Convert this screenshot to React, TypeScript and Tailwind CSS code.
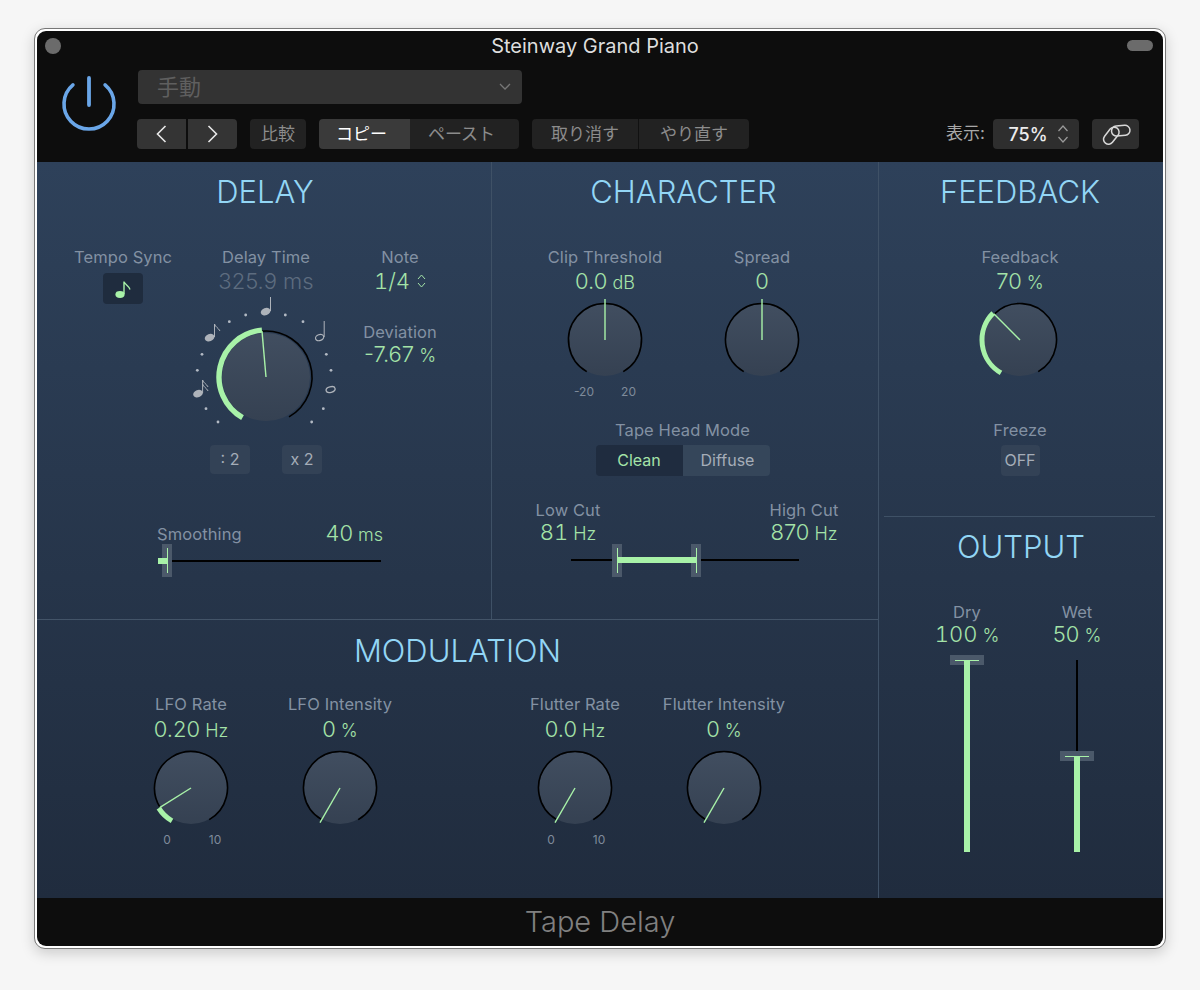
import React from "react";

const pt = (cx: number, cy: number, r: number, deg: number): [number, number] => {
  const a = (deg * Math.PI) / 180;
  return [cx + r * Math.sin(a), cy - r * Math.cos(a)];
};
const arc = (cx: number, cy: number, r: number, from: number, to: number) => {
  const [x1, y1] = pt(cx, cy, r, from);
  const [x2, y2] = pt(cx, cy, r, to);
  return `M${x1} ${y1}A${r} ${r} 0 ${to - from > 180 ? 1 : 0} 1 ${x2} ${y2}`;
};

const GREEN = "#a8f2a8";

function KnobGfx({ cx = 0, cy = 0, disc = 36, blackR = 36.5, greenR = 38, greenW = 5, value, len = 41, filled = false }: { cx?: number; cy?: number; disc?: number; blackR?: number; greenR?: number; greenW?: number; value: number; len?: number; filled?: boolean }) {
  const [px, py] = pt(cx, cy, len, value);
  return (
    <g>
      <defs>
        <linearGradient id="knobfill" x1="0" y1="0" x2="0" y2="1">
          <stop offset="0" stopColor="#414e60" />
          <stop offset="1" stopColor="#354152" />
        </linearGradient>
      </defs>
      <circle cx={cx} cy={cy} r={disc} fill="url(#knobfill)" />
      <path d={arc(cx, cy, blackR, filled ? value : -150, 150)} fill="none" stroke="#000" strokeWidth="1.6" />
      {filled && <path d={arc(cx, cy, greenR, -150, value)} fill="none" stroke={GREEN} strokeWidth={greenW} />}
      <line x1={cx} y1={cy} x2={px} y2={py} stroke={GREEN} strokeWidth="1.4" />
    </g>
  );
}

function Knob({ value, filled, len }: { value: number; filled?: boolean; len?: number }) {
  return (
    <svg width="88" height="88" viewBox="-44 -44 88 88" className="block">
      <KnobGfx value={value} filled={filled} len={len} />
    </svg>
  );
}

function Label({ children }: { children: React.ReactNode }) {
  return <div className="h-6 text-[16.5px] leading-[22px] text-[#8391a3] whitespace-nowrap text-center tracking-[0.1px]">{children}</div>;
}

function Value({ v, unit, tight, tab }: { v: string; unit?: string; tight?: boolean; tab?: boolean }) {
  return (
    <div className={`${tight ? "-mt-[2px]" : ""} ${tab ? "tabular-nums" : ""} h-[26px] leading-[22px] text-[22px] font-light text-[#a4e3a8] whitespace-nowrap text-center`}>
      {v}
      {unit && <span className="text-[18px] ml-[5px]">{unit}</span>}
    </div>
  );
}

function Title({ children }: { children: React.ReactNode }) {
  return <div className="h-[62px] leading-[60px] text-[31px] font-light text-[#93d6f5] text-center">{children}</div>;
}

function Handle({ className }: { className: string }) {
  return (
    <div className={`absolute top-0 h-[33px] w-[10px] bg-[#4b596a] flex justify-center ${className}`}>
      <div className="mt-1 h-[25px] w-px bg-[#a8f2a8]" />
    </div>
  );
}

function SmallBtn({ children, className = "" }: { children: React.ReactNode; className?: string }) {
  return <div className={`flex items-center justify-center rounded-[4px] bg-[#334256] pb-[2px] text-[#a5adb8] ${className}`}>{children}</div>;
}

function Fader({ top }: { top: number }) {
  return (
    <div className="relative mx-auto mt-[6px] h-[197px] w-[34px]">
      <div className="absolute left-[16px] top-[5px] h-[192px] w-[2px] bg-black" />
      <div className="absolute left-0 h-[10px] w-[34px] bg-[#4b596a] flex items-center justify-center" style={{ top }}>
        <div className="h-px w-[24px] bg-[#a8f2a8]" />
      </div>
      <div className="absolute left-[14px] bottom-0 w-[6px] bg-[#a8f2a8]" style={{ top: top + 5 }} />
    </div>
  );
}

function HeadBtn({ children, className = "" }: { children: React.ReactNode; className?: string }) {
  return <div className={`h-[30px] flex items-center justify-center text-[17px] ${className}`}>{children}</div>;
}

function Mod({ label, v, unit, value, filled, min, max, className = "" }: { label: string; v: string; unit: string; value: number; filled?: boolean; min?: string; max?: string; className?: string }) {
  return (
    <div className={`w-[120px] flex flex-col items-center ${className}`}>
      <Label>{label}</Label>
      <div className="mt-[1px]"><Value v={v} unit={unit} /></div>
      <Knob value={value} filled={filled} len={filled ? 37 : 40} />
      {min && (
        <div className="flex w-[72px] justify-between text-[12px] leading-[14px] text-[#7f8b9b] mt-[1px]">
          <span className="w-6 text-center">{min}</span>
          <span className="w-6 text-center">{max}</span>
        </div>
      )}
    </div>
  );
}

export default function App() {
  const dots: [number, number][] = [[557,252],[508,272],[426,370],[412,418],[438,533],[474,573],[676,252],[729,272],[799,370],[813,418],[790,533],[755,573]];
  return (
    <div className="w-[1200px] h-[990px] bg-[#f6f6f6] pt-[28px] pl-[34px] font-['Inter','Noto_Sans_CJK_JP',sans-serif]">
      <div className="w-[1132px] h-[921px] rounded-[11px] bg-white border border-[#777] p-[2px] shadow-[0_4px_14px_rgba(0,0,0,0.18)]">
        <div className="h-full w-full rounded-[9px] overflow-hidden bg-[#0d0d0d] flex flex-col">
          {/* Header */}
          <div className="h-[131px] shrink-0 relative flex">
            <div className="absolute left-[8px] top-[7px] h-4 w-4 rounded-full bg-[#6b6b6b]" />
            <div className="absolute right-[10px] top-[9px] h-[11px] w-[26px] rounded-full bg-[#6b6b6b]" />
            <div className="absolute left-[408px] top-[3px] w-[300px] text-center text-[20px] leading-[24px] text-[#dedede] font-normal">Steinway Grand Piano</div>
            <div className="w-[101px] shrink-0 pl-[24px] pt-[43px]">
              <svg width="56" height="58" viewBox="0 0 56 58" className="block">
                <path d={arc(28, 30, 25, 40, 320)} fill="none" stroke="#6aa6e8" strokeWidth="3.6" strokeLinecap="round" />
                <line x1="28" y1="4" x2="28" y2="31" stroke="#6aa6e8" strokeWidth="3.8" strokeLinecap="round" />
              </svg>
            </div>
            <div className="flex-1 pt-[39px] min-w-0">
              <div className="h-[34px] w-[384px] rounded-[4px] bg-[#333333] flex items-center justify-between pl-[19px] pr-[11px] text-[22px] text-[#5f5f5f]">
                <span>手動</span>
                <svg width="12" height="8" viewBox="0 0 12 8"><path d="M1 1l5 5 5-5" fill="none" stroke="#777" strokeWidth="1.3" /></svg>
              </div>
              <div className="mt-[15px] flex items-center -ml-px">
                <div className="flex w-[100px] h-[30px] rounded-[4px] overflow-hidden gap-[2px]">
                  <div className="flex-1 bg-[#343434] flex items-center justify-center"><svg width="11" height="18" viewBox="0 0 11 18"><path d="M9.5 1L1.5 9l8 8" fill="none" stroke="#e8e8e8" strokeWidth="1.6" /></svg></div>
                  <div className="flex-1 bg-[#343434] flex items-center justify-center"><svg width="11" height="18" viewBox="0 0 11 18"><path d="M1.5 1l8 8-8 8" fill="none" stroke="#e8e8e8" strokeWidth="1.6" /></svg></div>
                </div>
                <HeadBtn className="w-[56px] ml-[13px] rounded-[4px] bg-[#222] pt-[2px] text-[#8c8c8c]">比較</HeadBtn>
                <div className="ml-[13px] flex rounded-[4px] overflow-hidden">
                  <HeadBtn className="w-[91px] bg-[#3a3a3a] text-white pr-[6px] pt-[1px]">コピー</HeadBtn>
                  <HeadBtn className="w-[109px] bg-[#222] text-[#8c8c8c] pr-[6px] pt-[1px]">ペースト</HeadBtn>
                </div>
                <div className="ml-[13px] flex rounded-[4px] overflow-hidden">
                  <HeadBtn className="w-[107px] bg-[#222] text-[#8c8c8c] border-r border-[#111] pt-[2px]">取り消す</HeadBtn>
                  <HeadBtn className="w-[110px] bg-[#222] text-[#8c8c8c] pt-[2px]">やり直す</HeadBtn>
                </div>
                <div className="w-[244px] text-right text-[17px] text-[#a8a8a8] pr-[8px]">表示:</div>
                <HeadBtn className="w-[86px] rounded-[4px] bg-[#2e2e2e] text-[#ececec] font-medium text-[18px] gap-[9px] pl-[5px]">
                  <span>75%</span>
                  <svg width="12" height="20" viewBox="0 0 12 20"><path d="M1.5 7L6 2l4.5 5M1.5 13L6 18l4.5-5" fill="none" stroke="#999" strokeWidth="1.2" /></svg>
                </HeadBtn>
                <HeadBtn className="w-[47px] ml-[13px] rounded-[4px] bg-[#2e2e2e]">
                  <svg width="30" height="24" viewBox="0 0 30 24">
                    <rect x="10.5" y="3.7" width="18.5" height="10" rx="5" fill="none" stroke="#d8d8d8" strokeWidth="1.5" transform="rotate(-5 19.7 8.7)" />
                    <rect x="0.8" y="8.7" width="19" height="10" rx="5" fill="none" stroke="#d8d8d8" strokeWidth="1.5" transform="rotate(-52 10.3 13.7)" />
                  </svg>
                </HeadBtn>
              </div>
            </div>
          </div>

          {/* Panel */}
          <div className="h-[736px] shrink-0 flex bg-linear-to-b from-[#2e415a] to-[#202c3e]">
            <div className="w-[841px] shrink-0 flex flex-col">
              <div className="h-[458px] shrink-0 flex border-b border-[#435468]">
                {/* DELAY */}
                <div className="w-[455px] shrink-0 border-r border-[#3f5166]">
                  <div className="pl-[2px]"><Title>DELAY</Title></div>
                  <div className="flex pt-[22px] pl-[38px]">
                    <div className="w-[96px] flex flex-col items-center">
                      <Label>Tempo Sync</Label>
                      <div className="mt-[3px] h-[31px] w-[40px] rounded-[4px] bg-[#1f2c3e] flex items-center justify-center">
                        <svg width="18" height="20" viewBox="0 0 18 20"><ellipse cx="6" cy="15.5" rx="4.6" ry="3.4" fill="#a8f2a8" /><path d="M10 15V2.5c.5 3 5 4 6 8" fill="none" stroke="#a8f2a8" strokeWidth="1.4" /></svg>
                      </div>
                    </div>
                    <div className="w-[190px] flex flex-col items-center">
                      <Label>Delay Time</Label>
                      <div className="h-[26px] leading-[22px] text-[22px] font-light text-[#5d6c7f] whitespace-nowrap">325.9 ms</div>
                      <svg width="190" height="141" viewBox="171 295 190 141" className="block">
                        {dots.map(([x, y]) => <circle key={x + "," + y} cx={60 + x / 3} cy={230 + y / 3} r="1.4" fill="#b3bac4" />)}
                        <KnobGfx cx={266} cy={376} disc={44} blackR={46} greenR={47} greenW={5.4} value={-5} len={46} filled />
                        <g fill="#aeb3ba" stroke="#aeb3ba">
                          <ellipse cx="265.6" cy="310.6" rx="5" ry="3.6" stroke="none" transform="rotate(-20 265.6 310.6)" />
                          <line x1="270.5" y1="296" x2="270.5" y2="310" strokeWidth="1" />
                          <ellipse cx="209.6" cy="336.6" rx="5" ry="3.6" stroke="none" transform="rotate(-20 209.6 336.6)" />
                          <path d="M214.5 323v13M214.5 323c.8 3 4 4 5.5 7" fill="none" strokeWidth="1" />
                          <ellipse cx="319.6" cy="336.6" rx="4.2" ry="3" fill="none" strokeWidth="1.2" transform="rotate(-20 319.6 336.6)" />
                          <line x1="324.2" y1="320" x2="324.2" y2="336" strokeWidth="1" />
                          <ellipse cx="330.6" cy="388.6" rx="4.6" ry="2.8" fill="none" strokeWidth="1.3" transform="rotate(-15 330.6 388.6)" />
                          <ellipse cx="198" cy="392.6" rx="5" ry="3.6" stroke="none" transform="rotate(-20 198 392.6)" />
                          <path d="M202.6 379v13M202.6 379c.8 3 4 4 5.5 7M202.6 383c.8 3 4 4 5.5 7" fill="none" strokeWidth="1" />
                        </g>
                      </svg>
                      <div className="mt-[8px] flex gap-[32px]">
                        <SmallBtn className="h-[29px] w-[40px] text-[16px]">: 2</SmallBtn>
                        <SmallBtn className="h-[29px] w-[40px] text-[16px]">x 2</SmallBtn>
                      </div>
                    </div>
                    <div className="w-[78px] flex flex-col items-center">
                      <Label>Note</Label>
                      <div className="flex items-start gap-[7px] h-[26px]">
                        <span className="text-[22px] font-light tabular-nums text-[#a4e3a8] leading-[22px]">1/4</span>
                        <svg width="9" height="14" viewBox="0 0 9 14" className="mt-[4px]"><path d="M1 5l3.5-4L8 5M1 9l3.5 4L8 9" fill="none" stroke="#a4e3a8" strokeWidth="1" /></svg>
                      </div>
                      <div className="mt-[25px]"><Label>Deviation</Label></div>
                      <Value v="-7.67" unit="%" tight />
                    </div>
                  </div>
                  <div className="ml-[120px] mt-[49px] w-[226px]">
                    <div className="flex justify-between items-center h-6">
                      <Label>Smoothing</Label>
                      <Value v="40" unit="ms" />
                    </div>
                    <div className="relative -mt-[3px] h-[33px] w-[226px]">
                      <div className="absolute left-[1px] right-[2px] top-[16px] h-[2px] bg-black" />
                      <Handle className="left-[5px]" />
                      <div className="absolute left-[1px] top-[14px] h-[6px] w-[9px] bg-[#a8f2a8]" />
                    </div>
                  </div>
                </div>
                {/* CHARACTER */}
                <div className="flex-1 min-w-0">
                  <div className="pr-[3px]"><Title>CHARACTER</Title></div>
                  <div className="flex pt-[22px] pl-[53px]">
                    <div className="w-[120px] flex flex-col items-center">
                      <Label>Clip Threshold</Label>
                      <Value v="0.0" unit="dB" />
                      <Knob value={0} />
                      <div className="flex w-[62px] justify-between text-[12px] leading-[14px] text-[#7f8b9b] mt-[1px]">
                        <span>-20</span><span>20</span>
                      </div>
                    </div>
                    <div className="w-[120px] ml-[37px] flex flex-col items-center">
                      <Label>Spread</Label>
                      <Value v="0" />
                      <Knob value={0} />
                    </div>
                  </div>
                  <div className="mt-[20px] flex flex-col items-center -ml-[5px]">
                    <Label>Tape Head Mode</Label>
                    <div className="mt-[2px] flex h-[31px] w-[174px] rounded-[4px] overflow-hidden text-[16px]">
                      <div className="w-[87px] bg-[#1f2c3f] text-[#a4e3a8] flex items-center justify-center pb-[1px]">Clean</div>
                      <div className="w-[87px] bg-[#35465a] text-[#a5adb8] flex items-center justify-center pb-[1px] pl-[3px]">Diffuse</div>
                    </div>
                  </div>
                  <div className="mt-[23px] pl-[26px] pr-[24px] flex justify-between">
                    <div className="w-[100px]"><Label>Low Cut</Label><Value v="81" unit="Hz" tight tab /></div>
                    <div className="w-[100px]"><Label>High Cut</Label><Value v="870" unit="Hz" tight /></div>
                  </div>
                  <div className="relative ml-[79px] -mt-[3px] h-[33px] w-[228px]">
                    <div className="absolute inset-x-0 top-[15px] h-[2px] bg-black" />
                    <Handle className="left-[41px]" />
                    <Handle className="left-[120px]" />
                    <div className="absolute left-[46px] w-[79px] top-[13px] h-[6px] bg-[#a8f2a8]" />
                  </div>
                </div>
              </div>
              {/* MODULATION */}
              <div className="flex-1 min-h-0 pt-[1px]">
                <Title>MODULATION</Title>
                <div className="flex pt-[10px] pl-[94px]">
                  <Mod label="LFO Rate" v="0.20" unit="Hz" value={-122} filled min="0" max="10" />
                  <Mod label="LFO Intensity" v="0" unit="%" value={-150} className="ml-[29px]" />
                  <Mod label="Flutter Rate" v="0.0" unit="Hz" value={-150} min="0" max="10" className="ml-[115px]" />
                  <Mod label="Flutter Intensity" v="0" unit="%" value={-150} className="ml-[29px]" />
                </div>
              </div>
            </div>
            {/* RIGHT */}
            <div className="flex-1 min-w-0 border-l border-[#3f5166] flex flex-col">
              <div className="h-[354px] shrink-0 flex flex-col items-center pr-[2px]">
                <Title>FEEDBACK</Title>
                <div className="pt-[22px] flex flex-col items-center">
                  <Label>Feedback</Label>
                  <Value v="70" unit="%" />
                  <Knob value={-45} filled len={37} />
                </div>
                <div className="mt-[35px]"><Label>Freeze</Label></div>
                <SmallBtn className="mt-[2px] h-[31px] w-[39px] text-[16px]">OFF</SmallBtn>
              </div>
              <div className="h-px mx-[5px] mr-[8px] bg-[#3f5166]" />
              <div className="flex-1 min-h-0">
                <Title>OUTPUT</Title>
                <div className="flex pt-[22px] pl-[38px] gap-[10px]">
                  <div className="w-[100px]">
                    <Label>Dry</Label>
                    <Value v="100" unit="%" tight tab />
                    <Fader top={0} />
                  </div>
                  <div className="w-[100px]">
                    <Label>Wet</Label>
                    <Value v="50" unit="%" tight />
                    <Fader top={96} />
                  </div>
                </div>
              </div>
            </div>
          </div>

          {/* Footer */}
          <div className="flex-1 min-h-0 flex items-center justify-center text-[29px] font-light text-[#808080]">Tape Delay</div>
        </div>
      </div>
    </div>
  );
}
